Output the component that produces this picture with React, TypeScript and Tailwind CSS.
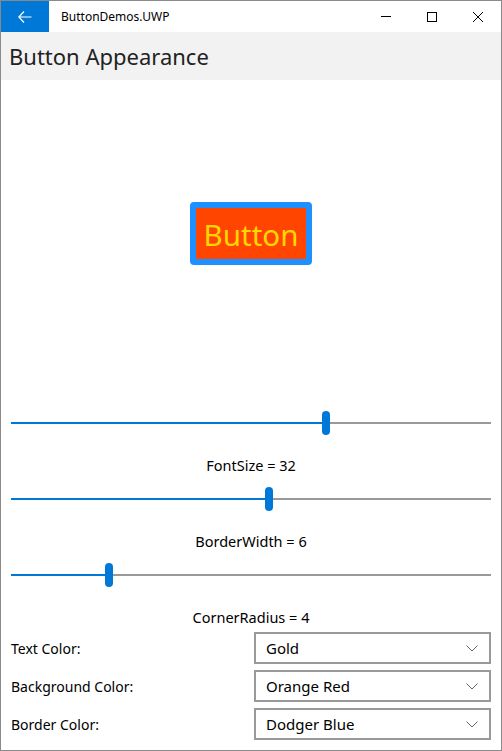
import React from 'react';

const font = { fontFamily: '"Segoe UI", "Noto Sans", "Open Sans", sans-serif' };

const Slider: React.FC<{ filled: number }> = ({ filled }) => (
  <div className="flex h-[32px] items-center px-[10px]">
    <div className="h-[2px] bg-[#0078d7]" style={{ width: filled }} />
    <div className="h-[24px] w-[8px] rounded-full bg-[#0078d7]" />
    <div className="h-[2px] flex-1 bg-[#999999]" />
  </div>
);

const Combo: React.FC<{ label: string; value: string }> = ({ label, value }) => (
  <div className="flex items-center">
    <div className="w-[253px] pl-[10px] text-[14px] text-black">{label}</div>
    <div className="flex h-[32px] w-[237px] items-center justify-between border-2 border-[#999999] bg-white pl-[10px] pr-[10px] text-[15px] text-black">
      <span>{value}</span>
      <svg width="12" height="7" viewBox="0 0 12 7" className="mr-[1px]">
        <path d="M0.5 0.5 L6 6 L11.5 0.5" fill="none" stroke="#666" strokeWidth="1" />
      </svg>
    </div>
  </div>
);

export default function App() {
  return (
    <div className="h-[751px] w-[502px] overflow-hidden border border-[#8a8a8a] bg-white" style={font}>
      {/* title bar */}
      <div className="flex h-[31px] items-center">
        <div className="flex h-full w-[48px] items-center justify-center bg-[#0078d7]">
          <svg width="14" height="12" viewBox="0 0 14 12">
            <path d="M6 0.5 L0.8 6 L6 11.5 M0.8 6 H13.5" fill="none" stroke="white" strokeWidth="1.2" />
          </svg>
        </div>
        <div className="ml-[12px] flex-1 text-[12px] text-black">ButtonDemos.UWP</div>
        <div className="flex h-full items-center">
          <div className="flex h-full w-[46px] items-center justify-center">
            <div className="h-[1px] w-[10px] bg-black" />
          </div>
          <div className="flex h-full w-[46px] items-center justify-center">
            <div className="h-[10px] w-[10px] border border-black" />
          </div>
          <div className="flex h-full w-[46px] items-center justify-center">
            <svg width="10" height="10" viewBox="0 0 10 10">
              <path d="M0 0 L10 10 M10 0 L0 10" stroke="black" strokeWidth="1" />
            </svg>
          </div>
        </div>
      </div>

      {/* header */}
      <div className="flex h-[48px] items-center bg-[#f2f2f2] pl-[8px] text-[22px] text-[#222222]">
        Button Appearance
      </div>

      {/* button preview */}
      <div className="flex h-[307px] items-center justify-center">
        <div className="flex h-[63px] w-[122px] items-center justify-center rounded-[4px] border-[6px] border-[#1e90ff] bg-[#ff4500] pt-[3px] text-[29.5px] text-[#ffd700]">
          Button
        </div>
      </div>

      <div className="mt-[20px]">
        <Slider filled={311} />
        <div className="mt-[16px] h-[20px] text-center text-[14.5px] leading-[20px] text-black">FontSize = 32</div>
        <div className="mt-[8px]">
          <Slider filled={254} />
        </div>
        <div className="mt-[16px] h-[20px] text-center text-[14.5px] leading-[20px] text-black">BorderWidth = 6</div>
        <div className="mt-[8px]">
          <Slider filled={94} />
        </div>
        <div className="mt-[16px] h-[20px] text-center text-[14.5px] leading-[20px] text-black">CornerRadius = 4</div>
      </div>

      <div className="mt-[5px] flex flex-col gap-[6px]">
        <Combo label="Text Color:" value="Gold" />
        <Combo label="Background Color:" value="Orange Red" />
        <Combo label="Border Color:" value="Dodger Blue" />
      </div>
    </div>
  );
}
